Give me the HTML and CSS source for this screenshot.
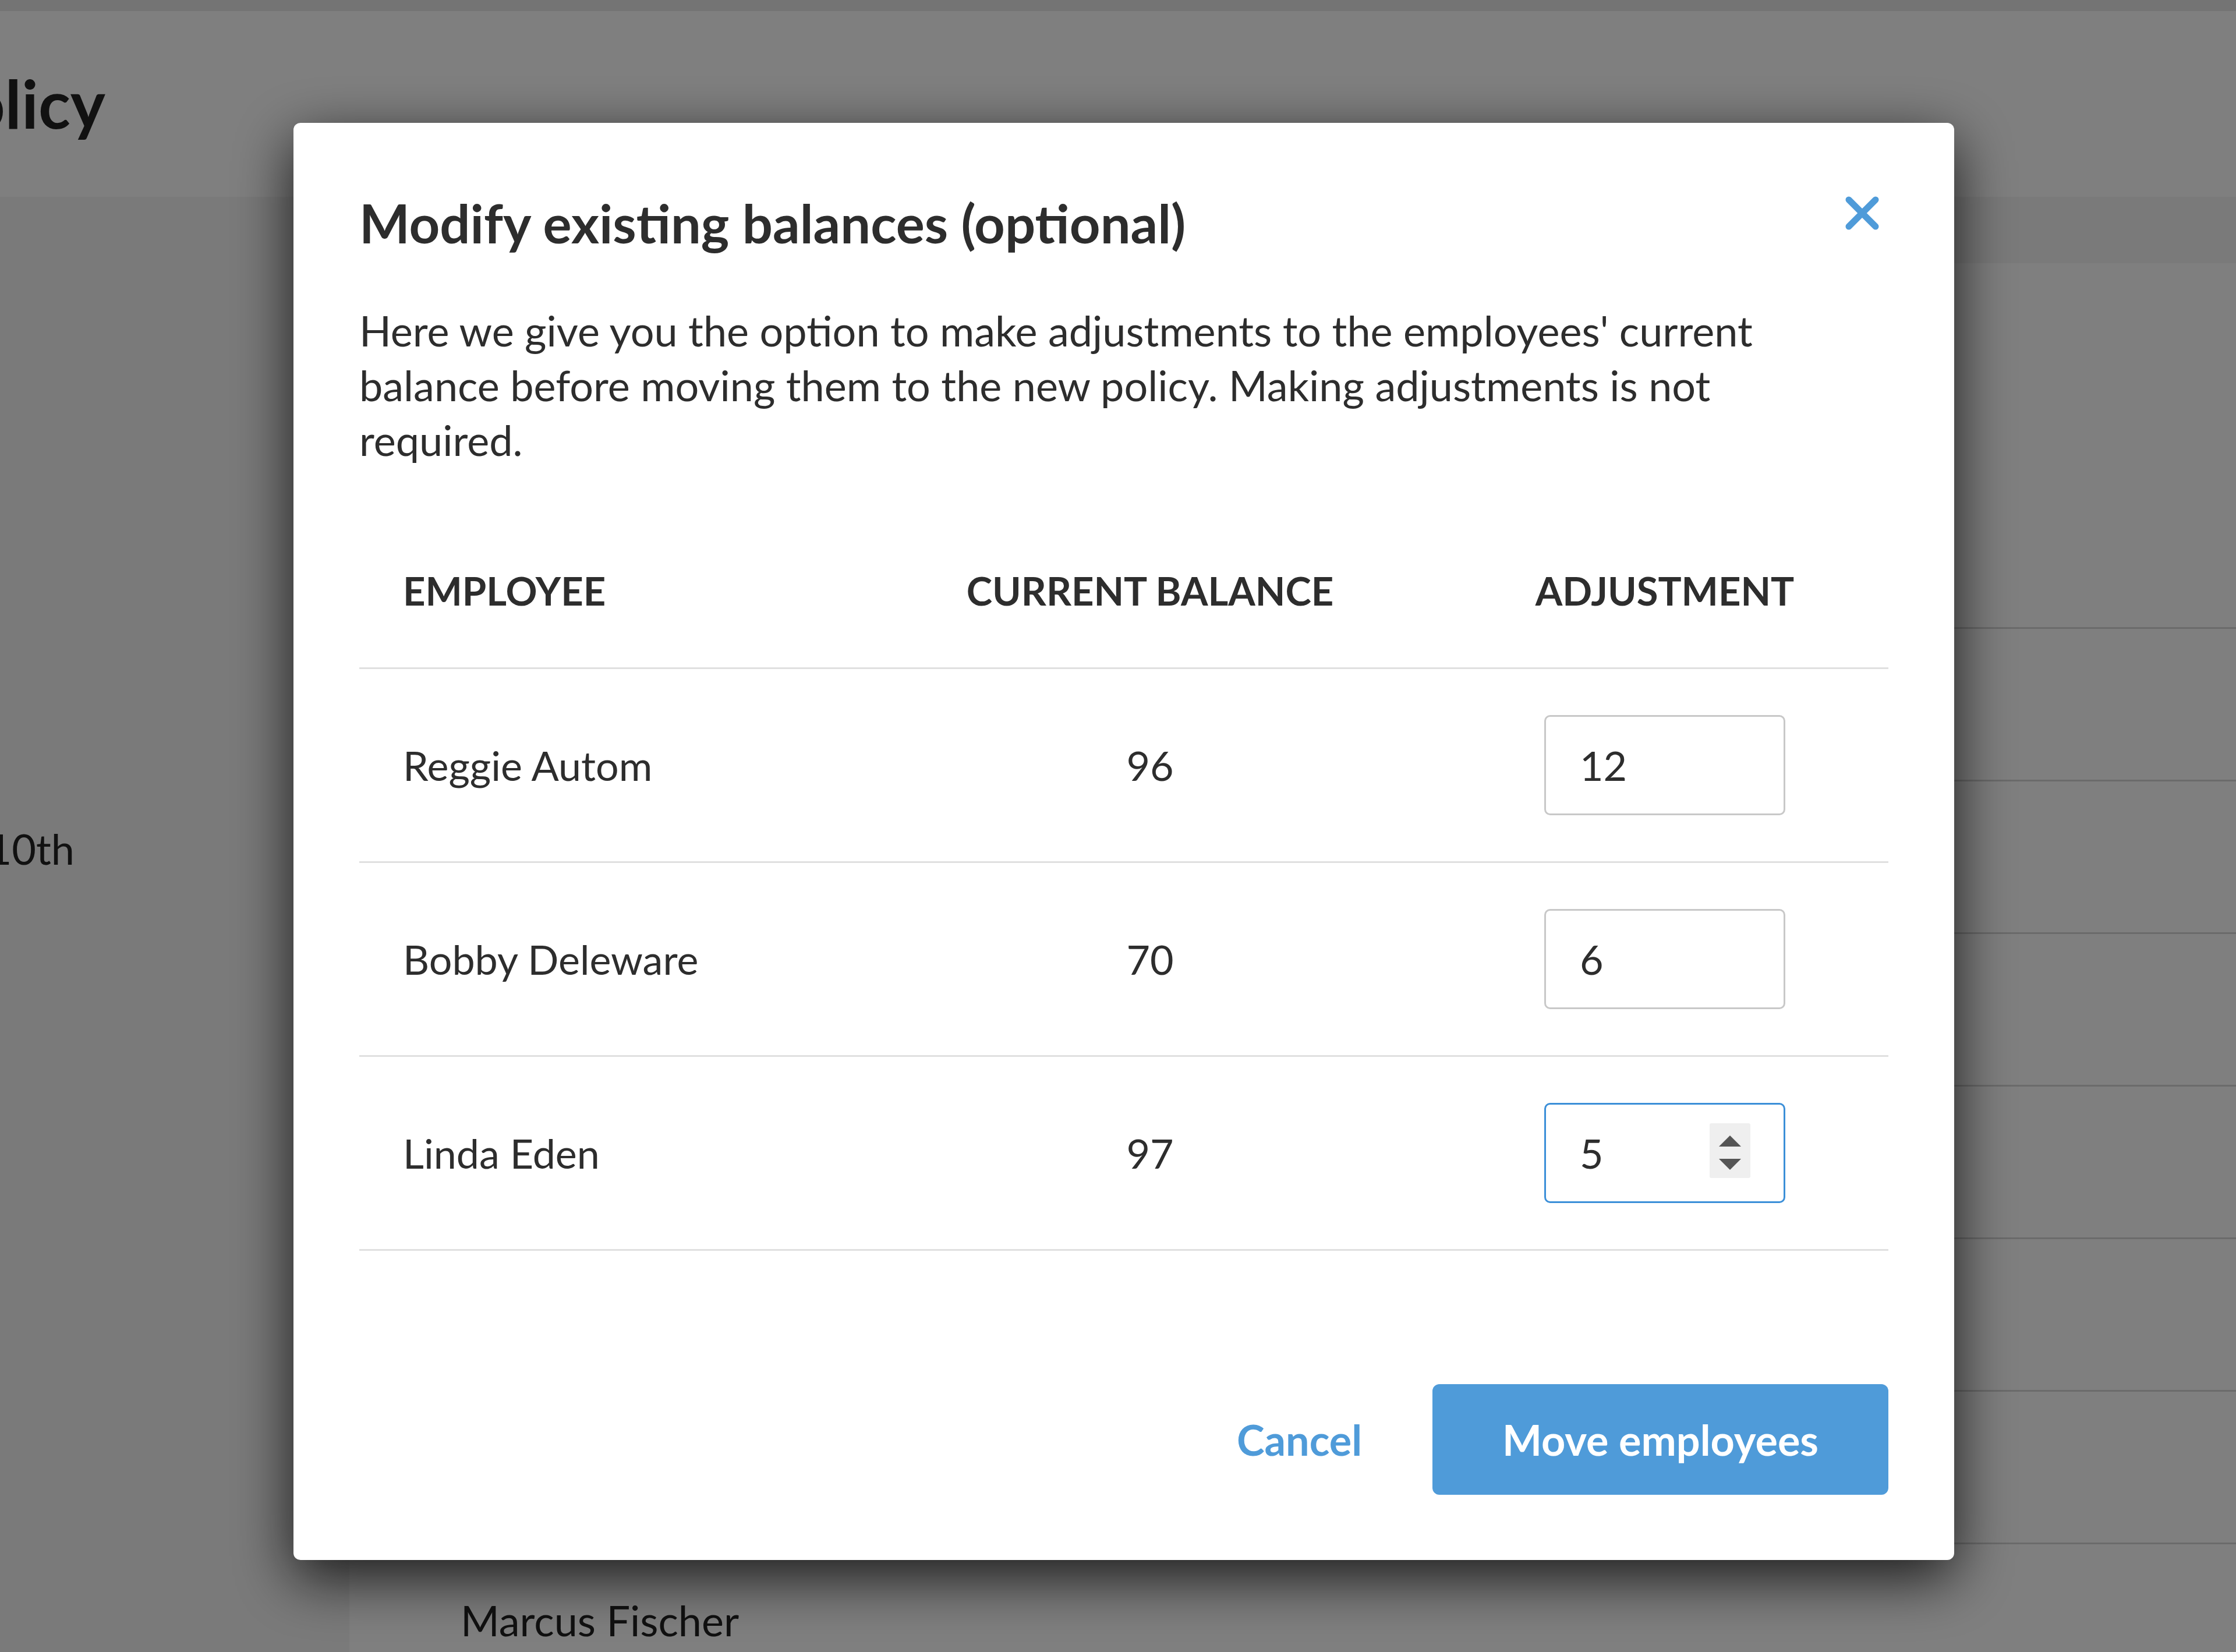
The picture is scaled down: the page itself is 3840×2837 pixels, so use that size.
FILE: index.html
```html
<!DOCTYPE html>
<html lang="en">
<head>
    <meta charset="UTF-8" />
    <title>Move employees</title>
    <link rel="stylesheet" href="styles.css">
</head>
<body>

    <div class="topbar"></div>

    <header class="page-header">
        <h1 class="page-title">Vacation policy</h1>
    </header>

    <div class="page-body">
        <aside class="sidebar">
            <p class="detail">Resets on January 10th</p>
        </aside>

        <section class="card">
            <div class="card-head"></div>
            <div class="card-row"></div>
            <div class="card-row"></div>
            <div class="card-row"></div>
            <div class="card-row"></div>
            <div class="card-row"></div>
            <div class="card-row"></div>
            <div class="card-row">Marcus Fischer</div>
        </section>
    </div>

    <div class="overlay">
        <div class="modal">
            <button class="cerrar" aria-label="Close">
                <svg width="58" height="58" viewBox="0 0 58 58">
                    <path d="M6 6 L52 52 M52 6 L6 52" stroke="#4f9bd9" stroke-width="11" stroke-linecap="round" fill="none" />
                </svg>
            </button>

            <h2 class="modal-title">Modify existing balances (optional)</h2>
            <p class="modal-text">Here we give you the option to make adjustments to the employees' current balance before moving them to the new policy. Making adjustments is not required.</p>

            <div class="balances">
                <div class="fila cabecera">
                    <div class="col-nombre">EMPLOYEE</div>
                    <div class="col-centro">CURRENT BALANCE</div>
                    <div class="col-centro">ADJUSTMENT</div>
                </div>

                <div class="fila">
                    <div class="col-nombre">Reggie Autom</div>
                    <div class="col-centro">96</div>
                    <div class="col-centro">
                        <div class="campo"><input type="text" value="12" readonly /></div>
                    </div>
                </div>

                <div class="fila">
                    <div class="col-nombre">Bobby Deleware</div>
                    <div class="col-centro">70</div>
                    <div class="col-centro">
                        <div class="campo"><input type="text" value="6" readonly /></div>
                    </div>
                </div>

                <div class="fila">
                    <div class="col-nombre">Linda Eden</div>
                    <div class="col-centro">97</div>
                    <div class="col-centro">
                        <div class="campo activo">
                            <input type="text" value="5" readonly />
                            <span class="spinner">
                                <svg width="70" height="94" viewBox="0 0 70 94">
                                    <path d="M16 40 L35 21 L54 40 Z" fill="#555" />
                                    <path d="M16 61 L54 61 L35 80 Z" fill="#555" />
                                </svg>
                            </span>
                        </div>
                    </div>
                </div>
            </div>

            <div class="acciones">
                <button class="cancelar">Cancel</button>
                <button class="mover">Move employees</button>
            </div>
        </div>
    </div>

</body>
</html>
```

FILE: styles.css
```css
html, body {
    height: 100%;
}

body {
    margin: 0;
    font-family: Lato, "Liberation Sans", sans-serif;
    background-color: #f4f4f4;
    color: #222;
    overflow: hidden;
}

.topbar {
    height: 19px;
    background-color: #e8e8e8;
}

.page-header {
    height: 319px;
    background: #fff;
    display: flex;
}

.page-title {
    width: 181px;
    margin: 0;
    padding-top: 90px;
    display: flex;
    justify-content: flex-end;
    white-space: nowrap;
    font-size: 114px;
    line-height: 136px;
    font-weight: 700;
    color: #222;
}

.page-body {
    display: flex;
    padding-top: 114px;
}

.sidebar {
    width: 600px;
    flex-shrink: 0;
}

.detail {
    width: 128px;
    margin: 962px 0 0;
    display: flex;
    justify-content: flex-end;
    white-space: nowrap;
    font-size: 72px;
    line-height: 86px;
}

.card {
    flex: 1;
    background: #fff;
}

.card-head {
    height: 625px;
}

.card-row {
    height: 259px;
    border-top: 3px solid #d6d6d6;
    display: flex;
    align-items: center;
    padding-left: 191px;
    font-size: 72px;
}

/* Modal */
.overlay {
    position: fixed;
    inset: 0;
    background: rgba(0, 0, 0, 0.5);
    display: flex;
    align-items: flex-start;
    padding: 211px 0 0 504px;
}

.modal {
    position: relative;
    width: 2852px;
    box-sizing: border-box;
    padding: 118px 113px 112px;
    background: #fff;
    border-radius: 12px;
    box-shadow: 0 30px 100px rgba(0, 0, 0, 0.8);
    color: #2d2d2d;
}

.cerrar {
    position: absolute;
    top: 126px;
    right: 129px;
    padding: 0;
    border: none;
    background: none;
    cursor: pointer;
    line-height: 0;
}

.modal-title {
    margin: 0;
    font-size: 92px;
    line-height: 108px;
    font-weight: 700;
}

.modal-text {
    max-width: 2500px;
    margin: 83px 0 80px;
    font-size: 72px;
    line-height: 94px;
}

.fila {
    display: grid;
    grid-template-columns: 858px 1fr 768px;
    align-items: center;
    height: 330px;
    border-bottom: 3px solid #e0e0e0;
    font-size: 70px;
    line-height: 84px;
}

.fila.cabecera {
    height: 174px;
    padding-top: 90px;
    align-items: start;
    font-size: 67px;
    font-weight: 700;
}

.col-nombre {
    padding-left: 75px;
}

.col-centro {
    display: flex;
    justify-content: center;
}

.campo {
    position: relative;
    width: 414px;
    height: 172px;
}

.campo input {
    width: 100%;
    height: 100%;
    box-sizing: border-box;
    padding: 0 0 0 58px;
    border: 3px solid #c8c8c8;
    border-radius: 10px;
    font-family: inherit;
    font-size: 70px;
    color: #2d2d2d;
    background: #fff;
    outline: none;
}

.campo.activo input {
    border-color: #3b8fd8;
}

.spinner {
    position: absolute;
    top: 35px;
    right: 60px;
    width: 70px;
    height: 94px;
    background: #efefef;
    border-radius: 3px;
    line-height: 0;
}

.acciones {
    display: flex;
    justify-content: flex-end;
    align-items: center;
    margin-top: 229px;
}

.acciones button {
    font-family: inherit;
    font-size: 72px;
    font-weight: 700;
    border: none;
    cursor: pointer;
}

.cancelar {
    background: none;
    color: #4f9bd9;
    padding: 0;
    margin-right: 121px;
}

.mover {
    height: 190px;
    padding: 0 120px;
    background-color: #4f9bd9;
    color: #fff;
    border-radius: 12px;
}
```
